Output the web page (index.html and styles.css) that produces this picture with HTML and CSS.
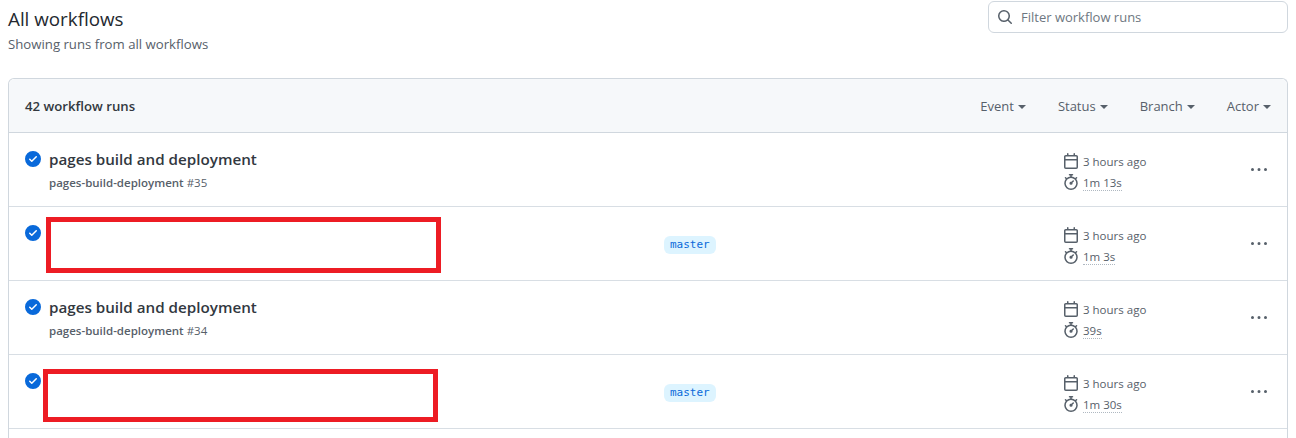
FILE: index.html
```html
<!DOCTYPE html>
<html lang="en">
  <head>
    <meta charset="UTF-8" />
    <title>All workflows</title>
    <link rel="stylesheet" href="styles.css">
  </head>
  <body>
    <svg class="sprites" aria-hidden="true">
      <symbol id="i-check" viewBox="0 0 16 16"><path d="M8 16A8 8 0 1 1 8 0a8 8 0 0 1 0 16Zm3.78-9.72a.751.751 0 0 0-.018-1.042.751.751 0 0 0-1.042-.018L6.75 9.19 5.28 7.72a.751.751 0 0 0-1.042.018.751.751 0 0 0-.018 1.042l2 2a.75.75 0 0 0 1.06 0Z"/></symbol>
      <symbol id="i-search" viewBox="0 0 16 16"><path d="M10.68 11.74a6 6 0 0 1-7.922-8.982 6 6 0 0 1 8.982 7.922l3.04 3.04a.749.749 0 0 1-.326 1.275.749.749 0 0 1-.734-.215ZM11.5 7a4.499 4.499 0 1 0-8.997 0A4.499 4.499 0 0 0 11.5 7Z"/></symbol>
      <symbol id="i-calendar" viewBox="0 0 16 16"><path d="M4.75 0a.75.75 0 0 1 .75.75V2h5V.75a.75.75 0 0 1 1.5 0V2h1.25c.966 0 1.75.784 1.75 1.75v10.5A1.75 1.75 0 0 1 13.25 16H2.75A1.75 1.75 0 0 1 1 14.25V3.75C1 2.784 1.784 2 2.75 2H4V.75A.75.75 0 0 1 4.75 0ZM2.5 7.5v6.75c0 .138.112.25.25.25h10.5a.25.25 0 0 0 .25-.25V7.5Zm10.75-4H2.75a.25.25 0 0 0-.25.25V6h11V3.75a.25.25 0 0 0-.25-.25Z"/></symbol>
      <symbol id="i-stopwatch" viewBox="0 0 16 16"><path d="M5.75.75A.75.75 0 0 1 6.5 0h3a.75.75 0 0 1 0 1.5h-.75v1l-.001.041a6.724 6.724 0 0 1 3.464 1.435l.007-.006.75-.75a.75.75 0 1 1 1.06 1.06l-.75.75-.006.007a6.75 6.75 0 1 1-10.548 0L2.72 5.03l-.75-.75a.751.751 0 0 1 .018-1.042.751.751 0 0 1 1.042-.018l.75.75.007.006A6.72 6.72 0 0 1 7.25 2.541V1.5H6.5a.75.75 0 0 1-.75-.75ZM8 14.5a5.25 5.25 0 1 0-.001-10.501A5.25 5.25 0 0 0 8 14.5Zm.389-6.7 1.33-1.33a.75.75 0 1 1 1.061 1.06L9.45 8.861A1.503 1.503 0 0 1 8 10.75a1.499 1.499 0 1 1 .389-2.95Z"/></symbol>
      <symbol id="i-kebab" viewBox="0 0 16 16"><path d="M8 9a1.5 1.5 0 1 0 0-3 1.5 1.5 0 0 0 0 3ZM1.5 9a1.5 1.5 0 1 0 0-3 1.5 1.5 0 0 0 0 3Zm13 0a1.5 1.5 0 1 0 0-3 1.5 1.5 0 0 0 0 3Z"/></symbol>
    </svg>

    <header class="page-head">
      <div>
        <h2 class="page-title">All workflows</h2>
        <p class="page-sub">Showing runs from all workflows</p>
      </div>
      <div class="filter">
        <svg class="filter-icon"><use href="#i-search"/></svg>
        <span>Filter workflow runs</span>
      </div>
    </header>

    <section class="box">
      <div class="box-head">
        <strong class="run-count">42 workflow runs</strong>
        <div class="menus">
          <span class="menu">Event<i class="caret"></i></span>
          <span class="menu">Status<i class="caret"></i></span>
          <span class="menu">Branch<i class="caret"></i></span>
          <span class="menu">Actor<i class="caret"></i></span>
        </div>
      </div>

      <div class="run">
        <svg class="check"><use href="#i-check"/></svg>
        <div class="run-main">
          <div class="run-title">pages build and deployment</div>
          <div class="run-meta"><b>pages-build-deployment</b> #35</div>
        </div>
        <div class="run-branch"></div>
        <div class="run-time">
          <div class="time-line"><svg class="time-icon"><use href="#i-calendar"/></svg><span>3 hours ago</span></div>
          <div class="time-line"><svg class="time-icon"><use href="#i-stopwatch"/></svg><span class="dotted">1m 13s</span></div>
        </div>
        <svg class="kebab"><use href="#i-kebab"/></svg>
      </div>

      <div class="run">
        <svg class="check"><use href="#i-check"/></svg>
        <div class="run-main"></div>
        <div class="run-branch"><code class="branch">master</code></div>
        <div class="run-time">
          <div class="time-line"><svg class="time-icon"><use href="#i-calendar"/></svg><span>3 hours ago</span></div>
          <div class="time-line"><svg class="time-icon"><use href="#i-stopwatch"/></svg><span class="dotted">1m 3s</span></div>
        </div>
        <svg class="kebab"><use href="#i-kebab"/></svg>
        <div class="redact redact-a"></div>
      </div>

      <div class="run">
        <svg class="check"><use href="#i-check"/></svg>
        <div class="run-main">
          <div class="run-title">pages build and deployment</div>
          <div class="run-meta"><b>pages-build-deployment</b> #34</div>
        </div>
        <div class="run-branch"></div>
        <div class="run-time">
          <div class="time-line"><svg class="time-icon"><use href="#i-calendar"/></svg><span>3 hours ago</span></div>
          <div class="time-line"><svg class="time-icon"><use href="#i-stopwatch"/></svg><span class="dotted">39s</span></div>
        </div>
        <svg class="kebab"><use href="#i-kebab"/></svg>
      </div>

      <div class="run">
        <svg class="check"><use href="#i-check"/></svg>
        <div class="run-main"></div>
        <div class="run-branch"><code class="branch">master</code></div>
        <div class="run-time">
          <div class="time-line"><svg class="time-icon"><use href="#i-calendar"/></svg><span>3 hours ago</span></div>
          <div class="time-line"><svg class="time-icon"><use href="#i-stopwatch"/></svg><span class="dotted">1m 30s</span></div>
        </div>
        <svg class="kebab"><use href="#i-kebab"/></svg>
        <div class="redact redact-b"></div>
      </div>
    </section>
  </body>
</html>
```

FILE: styles.css
```css
body {
  margin: 0;
  padding: 1px 8px 0;
  font-family: "Open Sans", "Noto Sans", sans-serif;
  font-size: 13px;
  color: #24292f;
  background: #fff;
}
.sprites {
  display: none;
}
svg {
  fill: currentColor;
}

/* page title + filter */
.page-head {
  display: flex;
  justify-content: space-between;
  align-items: flex-start;
  height: 77px;
}
.page-title {
  margin: 4px 0 0;
  font-size: 18.8px;
  font-weight: 400;
  line-height: 28px;
}
.page-sub {
  margin: 1px 0 0;
  font-size: 13.2px;
  line-height: 20px;
  color: #57606a;
}
.filter {
  box-sizing: border-box;
  display: flex;
  align-items: center;
  gap: 8px;
  width: 300px;
  height: 32px;
  padding: 0 12px 0 8px;
  border: 1px solid #d0d7de;
  border-radius: 6px;
  color: #6e7781;
  font-size: 13px;
}
.filter-icon {
  width: 16px;
  height: 16px;
  color: #57606a;
}

/* runs box, cut off by the bottom of the window */
.box {
  box-sizing: border-box;
  height: 360px;
  border: 1px solid #d0d7de;
  border-bottom: none;
  border-radius: 6px 6px 0 0;
}
.box-head {
  box-sizing: border-box;
  display: flex;
  justify-content: space-between;
  align-items: center;
  height: 54px;
  padding: 0 16px;
  background: #f6f8fa;
  border-radius: 6px 6px 0 0;
  border-bottom: 1px solid #d0d7de;
}
.run-count {
  font-size: 13.2px;
  font-weight: 600;
  color: #32383f;
}
.menus {
  display: flex;
  gap: 32px;
}
.menu {
  color: #57606a;
  font-size: 13px;
}
.caret {
  display: inline-block;
  margin-left: 4px;
  vertical-align: middle;
  border-top: 4px solid #57606a;
  border-left: 4px solid transparent;
  border-right: 4px solid transparent;
}

.run {
  box-sizing: border-box;
  position: relative;
  display: flex;
  height: 74px;
  padding: 18px 16px 0;
  border-bottom: 1px solid #d8dee4;
}
.check {
  flex: none;
  width: 16px;
  height: 16px;
  margin-right: 8px;
  color: #0969da;
}
.run-main {
  width: 615px;
}
.run-title {
  margin-top: -3px;
  font-size: 15.2px;
  font-weight: 600;
  line-height: 22px;
  color: #32383f;
}
.run-meta {
  margin-top: 4px;
  font-size: 11.5px;
  line-height: 18px;
  color: #57606a;
}
.run-meta b {
  font-weight: 600;
}
.run-branch {
  width: 400px;
  padding-top: 9px;
}
.branch {
  display: inline-block;
  padding: 0 6px;
  line-height: 18px;
  font-family: "DejaVu Sans Mono", monospace;
  font-size: 11px;
  color: #0969da;
  background: #ddf4ff;
  border-radius: 6px;
}
.run-time {
  flex: 1;
  padding-top: 1px;
  font-size: 11.5px;
  color: #57606a;
}
.time-line {
  display: flex;
  align-items: center;
  gap: 4px;
  height: 21px;
  margin-top: -1px;
  margin-bottom: 1px;
  margin-left: -1px;
}
.time-icon {
  width: 16px;
  height: 16px;
  margin-top: -2px;
}
.dotted {
  border-bottom: 1px dotted #afb8c1;
}
.kebab {
  flex: none;
  width: 16px;
  height: 16px;
  margin: 11px 4px 0 0;
  color: #57606a;
}

/* red annotation boxes drawn over the screenshot */
.redact {
  box-sizing: border-box;
  position: absolute;
  width: 395px;
  border: 5px solid #ed1c24;
}
.redact-a {
  left: 37px;
  top: 10px;
  height: 56px;
}
.redact-b {
  left: 34px;
  top: 14px;
  height: 53px;
}
```
